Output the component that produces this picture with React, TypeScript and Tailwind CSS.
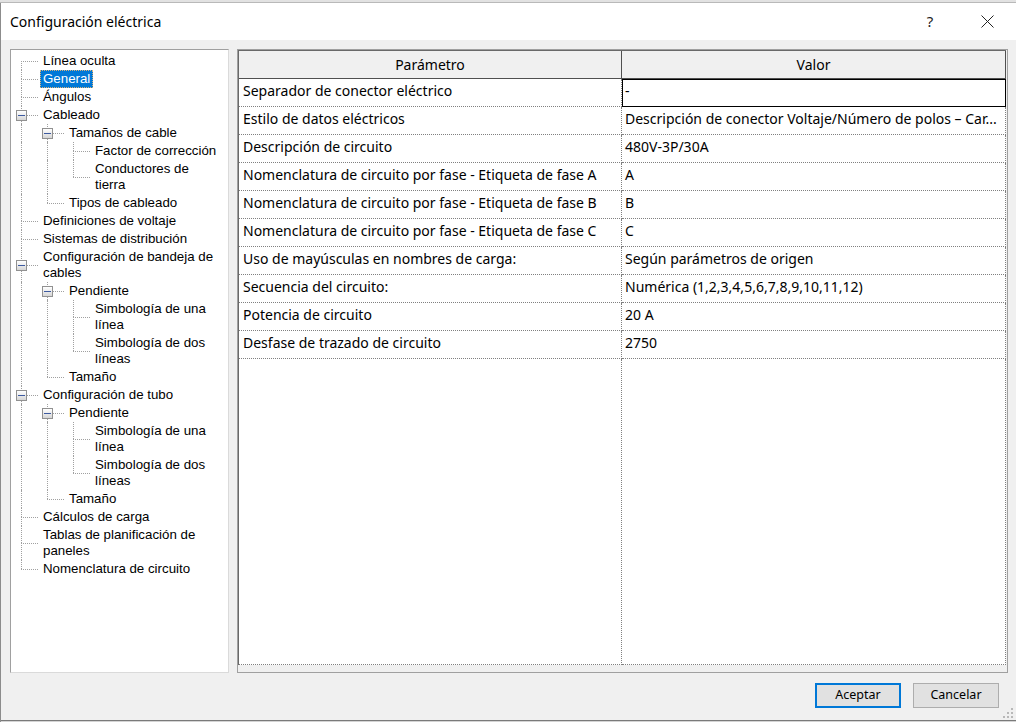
import React from "react";

type Node = { label: string[]; selected?: boolean; children?: Node[] };

const pendiente = (): Node[] => [
  {
    label: ["Pendiente"],
    children: [{ label: ["Simbología de una", "línea"] }, { label: ["Simbología de dos", "líneas"] }],
  },
  { label: ["Tamaño"] },
];

const tree: Node[] = [
  { label: ["Línea oculta"] },
  { label: ["General"], selected: true },
  { label: ["Ángulos"] },
  {
    label: ["Cableado"],
    children: [
      {
        label: ["Tamaños de cable"],
        children: [{ label: ["Factor de corrección"] }, { label: ["Conductores de", "tierra"] }],
      },
      { label: ["Tipos de cableado"] },
    ],
  },
  { label: ["Definiciones de voltaje"] },
  { label: ["Sistemas de distribución"] },
  { label: ["Configuración de bandeja de", "cables"], children: pendiente() },
  { label: ["Configuración de tubo"], children: pendiente() },
  { label: ["Cálculos de carga"] },
  { label: ["Tablas de planificación de", "paneles"] },
  { label: ["Nomenclatura de circuito"] },
];

type Row = { node: Node; depth: number; last: boolean; firstRoot: boolean; trail: boolean[] };

function flatten(nodes: Node[], depth: number, trail: boolean[], out: Row[]) {
  nodes.forEach((node, i) => {
    const last = i === nodes.length - 1;
    out.push({ node, depth, last, firstRoot: depth === 0 && i === 0, trail });
    if (node.children) flatten(node.children, depth + 1, [...trail, !last], out);
  });
  return out;
}

const rows = flatten(tree, 0, [], []);

const lineLeft = ["left-[10px]", "left-[36px]", "left-[62px]"];
const boxLeft = ["left-[5px]", "left-[31px]", "left-[57px]"];
const textPad = ["pl-[29px]", "pl-[55px]", "pl-[81px]"];

function TreeRow({ row }: { row: Row }) {
  const tall = row.node.label.length > 1;
  const d = row.depth;
  return (
    <div className={`relative flex ${textPad[d]}`}>
      {row.trail.map((more, k) =>
        more ? (
          <div key={k} className={`absolute top-0 bottom-0 w-0 border-l border-dotted border-[#a0a0a0] ${lineLeft[k]}`} />
        ) : null
      )}
      {!row.firstRoot && (
        <div
          className={`absolute top-0 w-0 border-l border-dotted border-[#a0a0a0] ${lineLeft[d]} ${tall ? "h-[17px]" : "h-[9px]"}`}
        />
      )}
      {!row.last && (
        <div
          className={`absolute bottom-0 w-0 border-l border-dotted border-[#a0a0a0] ${lineLeft[d]} ${tall ? "top-[17px]" : "top-[9px]"}`}
        />
      )}
      <div
        className={`absolute h-0 w-[17px] border-t border-dotted border-[#a0a0a0] ${lineLeft[d]} ${tall ? "top-[17px]" : "top-[9px]"}`}
      />
      {row.node.children && (
        <div
          className={`absolute w-[11px] h-[11px] border border-[#919191] bg-linear-to-b from-white to-[#d6d6d6] ${boxLeft[d]} ${tall ? "top-[12px]" : "top-[4px]"}`}
        >
          <div className="absolute left-[1px] right-[1px] top-[4px] h-px bg-[#3d5aa0]" />
        </div>
      )}
      <span
        className={`block whitespace-nowrap border border-dotted px-[2px] leading-4 ${
          row.node.selected ? "bg-[#0078d7] text-white border-[#d9b27a]" : "border-transparent text-black"
        }`}
      >
        {row.node.label.map((l, i) => (
          <React.Fragment key={i}>
            {i > 0 && <br />}
            {l}
          </React.Fragment>
        ))}
      </span>
    </div>
  );
}

const params: [string, string][] = [
  ["Separador de conector eléctrico", "-"],
  ["Estilo de datos eléctricos", "Descripción de conector Voltaje/Número de polos – Car..."],
  ["Descripción de circuito", "480V-3P/30A"],
  ["Nomenclatura de circuito por fase - Etiqueta de fase A", "A"],
  ["Nomenclatura de circuito por fase - Etiqueta de fase B", "B"],
  ["Nomenclatura de circuito por fase - Etiqueta de fase C", "C"],
  ["Uso de mayúsculas en nombres de carga:", "Según parámetros de origen"],
  ["Secuencia del circuito:", "Numérica (1,2,3,4,5,6,7,8,9,10,11,12)"],
  ["Potencia de circuito", "20 A"],
  ["Desfase de trazado de circuito", "2750"],
];

export default function App() {
  return (
    <div className="relative w-[1016px] h-[722px] flex flex-col overflow-hidden bg-[#f0f0f0] font-['Noto_Sans',sans-serif] text-black">
      <div className="h-[3px] bg-[#e2e2e2] border-b border-[#b9b9b9]" />
      <div className="flex-1 flex flex-col border-l border-[#8c8c8c]">
        {/* title bar */}
        <header className="h-[37px] shrink-0 bg-white flex items-center pl-[9px] pr-[6px]">
          <span className="text-[14px]">Configuración eléctrica</span>
          <span className="ml-auto mr-[11px] w-[46px] flex justify-center text-[15px] text-[#222]">?</span>
          <span className="w-[46px] flex justify-center">
            <svg width="13" height="13" viewBox="0 0 13 13">
              <path d="M0.5 0.5 L12.5 12.5 M12.5 0.5 L0.5 12.5" stroke="#222" strokeWidth="1" />
            </svg>
          </span>
        </header>

        <main className="flex-1 flex flex-col pt-[9px] pl-[9px]">
          <div className="flex h-[624px] gap-[8px]">
            {/* tree */}
            <div className="w-[219px] bg-white border border-t-[#a0a0a0] border-l-[#a0a0a0] border-r-[#dadada] border-b-[#dadada] pt-[2px] font-['Liberation_Sans',Arial,sans-serif] text-[13.3px]">
              {rows.map((r, i) => (
                <TreeRow key={i} row={r} />
              ))}
            </div>

            {/* grid */}
            <div className="w-[771px] flex flex-col border border-[#a0a0a0] pb-[7px] pr-px">
              <div className="flex-1 flex flex-col bg-white border-t border-l border-[#696969] text-[14px]">
                <div className="flex h-[28px] shrink-0 bg-[#f0f0f0] border-b border-[#505050]">
                  <div className="w-[383px] border-r border-[#505050] flex items-center justify-center">Parámetro</div>
                  <div className="flex-1 border-r border-[#505050] flex items-center justify-center">Valor</div>
                </div>
                {params.map(([p, v], i) => (
                  <div key={i} className="flex h-[28px] shrink-0">
                    <div className="w-[383px] border-r border-b border-dotted border-[#808080] pl-[4px] pt-[2px] leading-5 whitespace-nowrap overflow-hidden">
                      {p}
                    </div>
                    {i === 0 ? (
                      <div className="flex-1 min-w-0 border border-black pl-[2px] pt-[1px] leading-5 whitespace-nowrap overflow-hidden">
                        {v}
                      </div>
                    ) : (
                      <div className="flex-1 min-w-0 border-r border-b border-dotted border-[#808080] pl-[3px] pt-[2px] leading-5 whitespace-nowrap overflow-hidden">
                        {v}
                      </div>
                    )}
                  </div>
                ))}
                <div className="flex-1 flex">
                  <div className="w-[383px] border-r border-b border-dotted border-[#808080]" />
                  <div className="flex-1 border-r border-b border-dotted border-[#808080]" />
                </div>
              </div>
            </div>
          </div>

          {/* buttons */}
          <div className="mt-[10px] h-[25px] flex justify-end gap-[12px] pr-[17px] text-[12.5px]">
            <button className="w-[86px] h-[25px] bg-[#e1e1e1] border-2 border-[#0078d7] flex items-center justify-center">
              Aceptar
            </button>
            <button className="w-[86px] h-[25px] bg-[#e1e1e1] border border-[#adadad] flex items-center justify-center">
              Cancelar
            </button>
          </div>
          <div className="flex-1" />
        </main>
        <div className="h-px bg-[#7a7a7a]" />
        <div className="h-px bg-[#d4d4d4]" />
      </div>

      {/* size grip */}
      <svg className="absolute right-[2px] bottom-[3px]" width="12" height="12" viewBox="0 0 12 12">
        <rect x="9" y="1" width="2" height="2" fill="#b8b8b8" />
        <rect x="5" y="5" width="2" height="2" fill="#b8b8b8" />
        <rect x="9" y="5" width="2" height="2" fill="#b8b8b8" />
        <rect x="1" y="9" width="2" height="2" fill="#b8b8b8" />
        <rect x="5" y="9" width="2" height="2" fill="#b8b8b8" />
        <rect x="9" y="9" width="2" height="2" fill="#b8b8b8" />
      </svg>
    </div>
  );
}
